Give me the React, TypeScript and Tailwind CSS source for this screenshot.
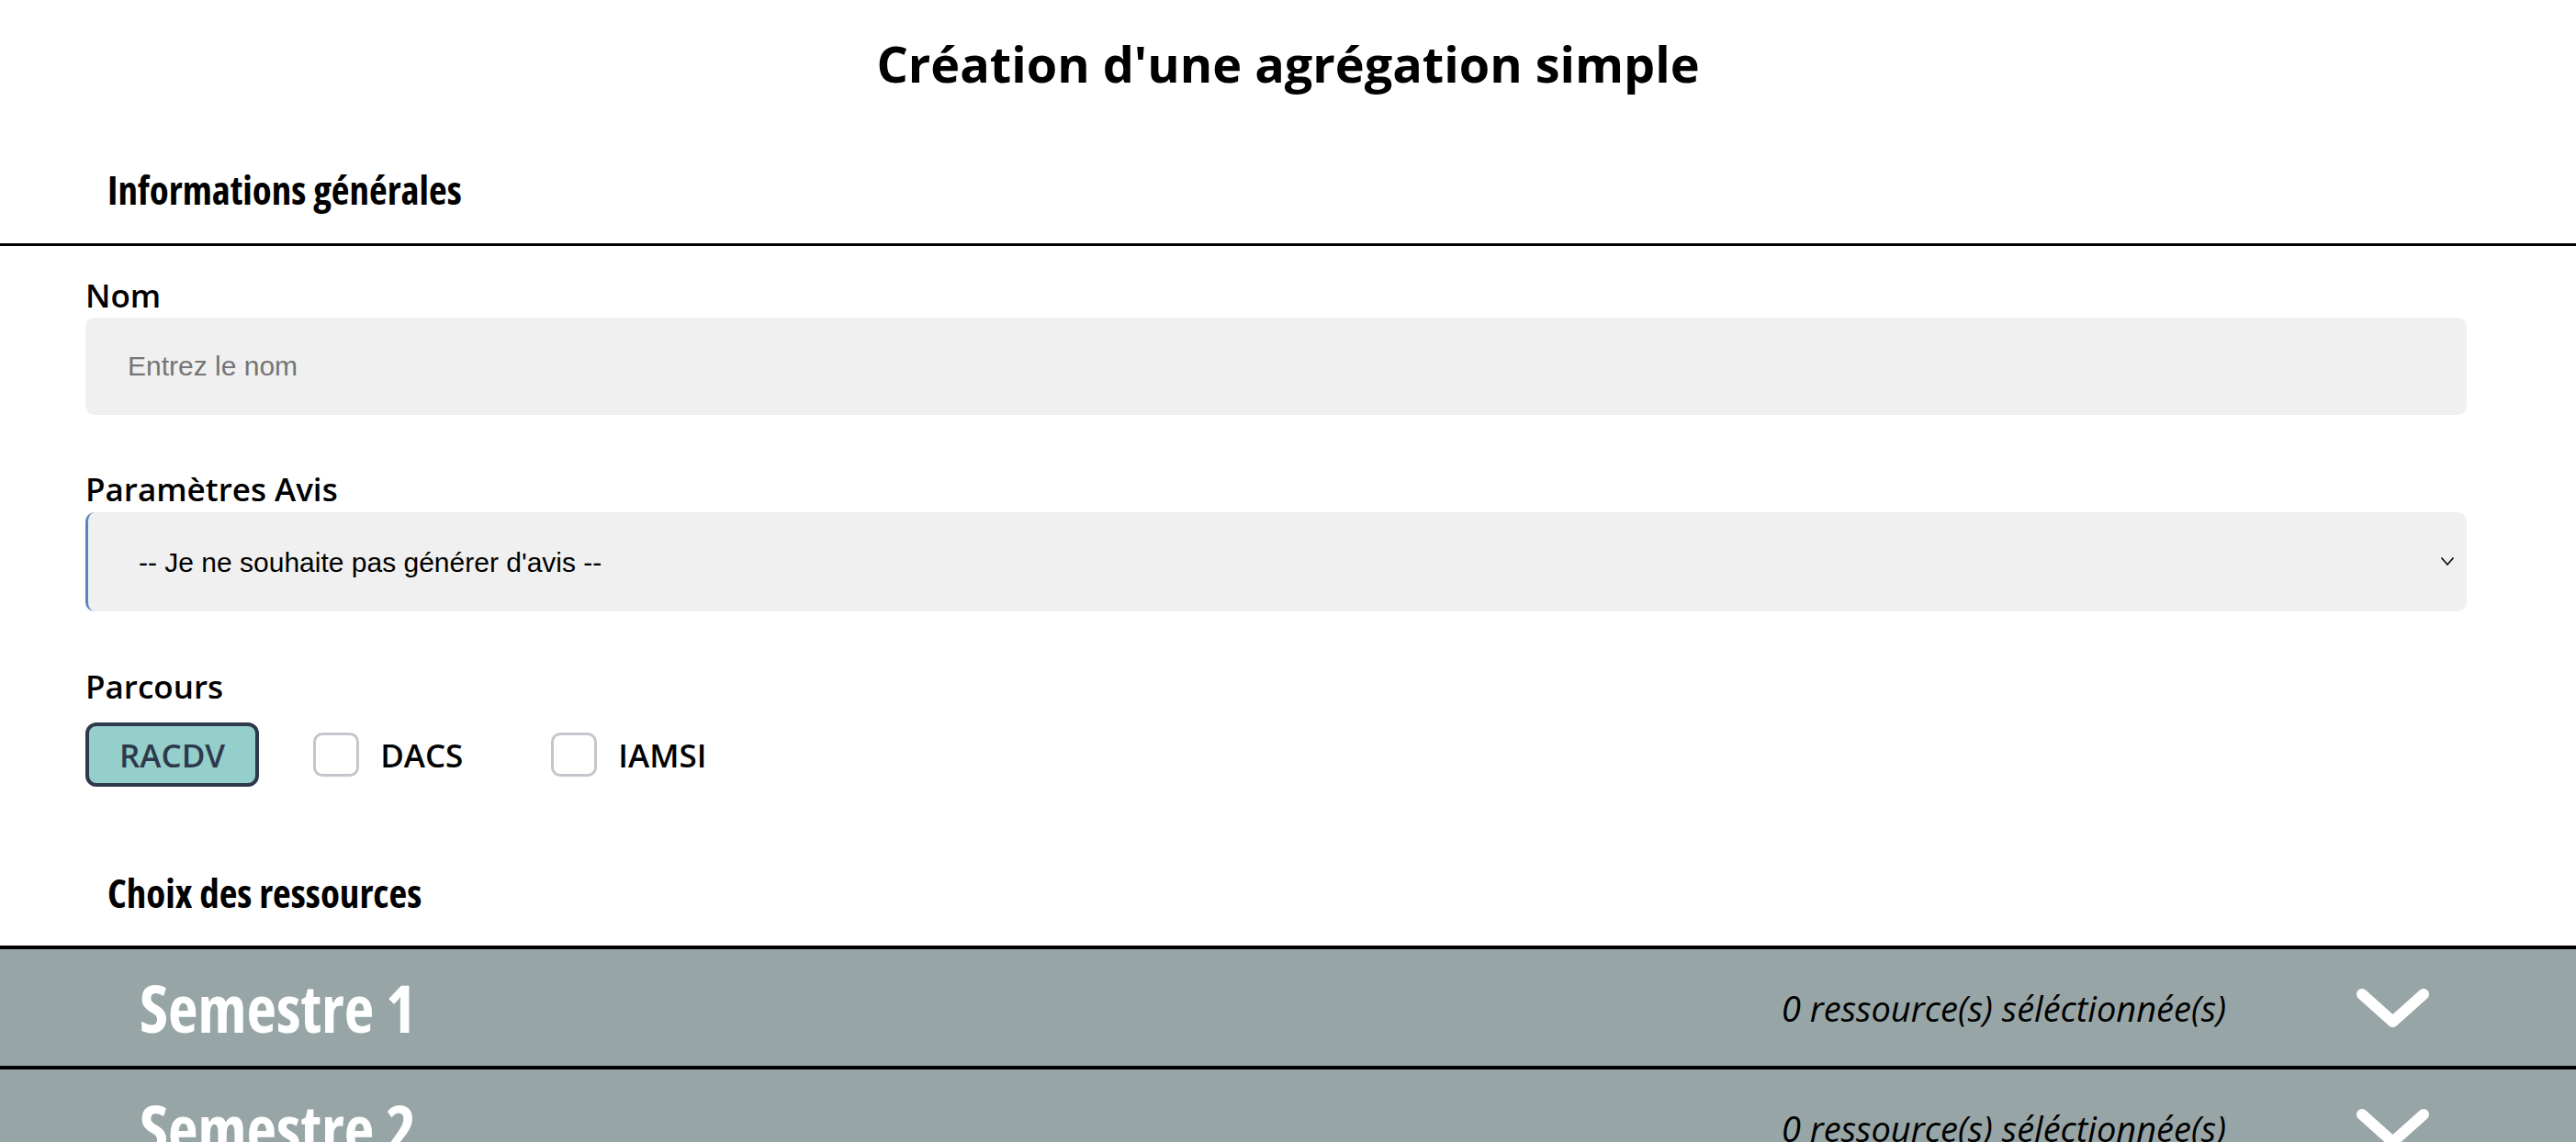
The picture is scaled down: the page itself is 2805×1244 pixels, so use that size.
import { useState } from "react";

const parcoursList = ["RACDV", "DACS", "IAMSI"];
const semestres = ["Semestre 1", "Semestre 2"];

export default function App() {
  const [selected, setSelected] = useState<string[]>(["RACDV"]);

  const toggle = (p: string) =>
    setSelected(selected.includes(p) ? selected.filter((s) => s !== p) : [...selected, p]);

  return (
    <div className="min-h-screen bg-white font-['Open_Sans',sans-serif] text-black">
      <h1 className="pt-[42px] text-center text-[54px] font-bold leading-none">
        Création d'une agrégation simple
      </h1>

      <div className="mt-[89px] border-b-[3px] border-black pb-[37px] pl-[117px]">
        <h2 className="font-['Open_Sans',sans-serif] font-stretch-condensed text-[43px] font-bold leading-none">
          Informations générales
        </h2>
      </div>

      <div className="pl-[93px] pr-[119px] pt-[36px]">
        <label className="block text-[35px] font-semibold leading-none">Nom</label>
        <input
          type="text"
          placeholder="Entrez le nom"
          className="mt-[7px] block h-[106px] w-full rounded-[10px] bg-[#f0f0f0] pl-[46px] font-['Liberation_Sans',Arial,sans-serif] text-[30px] outline-none placeholder:text-[#757575]"
        />

        <label className="mt-[63px] block text-[35px] font-semibold leading-none">Paramètres Avis</label>
        <div className="relative mt-[8px]">
          <select className="block h-[108px] w-full appearance-none rounded-[10px] border-l-[3px] border-[#5a84bd] bg-[#f0f0f0] pl-[55px] font-['Liberation_Sans',Arial,sans-serif] text-[30px] text-black outline-none">
            <option>-- Je ne souhaite pas générer d'avis --</option>
          </select>
          <svg
            className="pointer-events-none absolute right-[13px] top-[48px]"
            width="16"
            height="11"
            viewBox="0 0 16 11"
            fill="none"
            stroke="#111"
            strokeWidth="1.8"
          >
            <path d="M1.5 1.5 L8 9 L14.5 1.5" />
          </svg>
        </div>

        <label className="mt-[64px] block text-[35px] font-semibold leading-none">Parcours</label>
        <div className="mt-[22px] flex gap-[22px]">
          {parcoursList.map((p) => {
            const on = selected.includes(p);
            return (
              <button
                key={p}
                onClick={() => toggle(p)}
                className={`flex h-[70px] items-center rounded-[12px] border-4 px-[33px] text-[35px] font-semibold leading-none ${
                  on ? "border-[#2e3a4b] bg-[#94cfcc] text-[#2e3a4b]" : "border-transparent text-black"
                }`}
              >
                {!on && (
                  <span className="mr-[23px] block h-[48px] w-[50px] rounded-[10px] border-[3px] border-[#c3c7cc] bg-white" />
                )}
                {p}
              </button>
            );
          })}
        </div>
      </div>

      <div className="mt-[94px] border-b-4 border-black pb-[36px] pl-[117px]">
        <h2 className="font-['Open_Sans',sans-serif] font-stretch-condensed text-[43px] font-bold leading-none">
          Choix des ressources
        </h2>
      </div>

      {semestres.map((s) => (
        <div
          key={s}
          className="flex h-[131px] items-center border-b-4 border-black bg-[#97a5a6] pl-[152px] pr-[160px]"
        >
          <div className="flex-1 font-['Open_Sans',sans-serif] font-stretch-condensed text-[71px] font-bold leading-none text-white">
            {s}
          </div>
          <div className="font-['Open_Sans',sans-serif] text-[38px] font-normal italic leading-none text-black">
            0 ressource(s) séléctionnée(s)
          </div>
          <svg className="ml-[142px]" width="79" height="42" viewBox="0 0 79 42" fill="none" stroke="white" strokeWidth="12" strokeLinecap="round" strokeLinejoin="round">
            <path d="M6 6 L39.5 36 L73 6" />
          </svg>
        </div>
      ))}
    </div>
  );
}
